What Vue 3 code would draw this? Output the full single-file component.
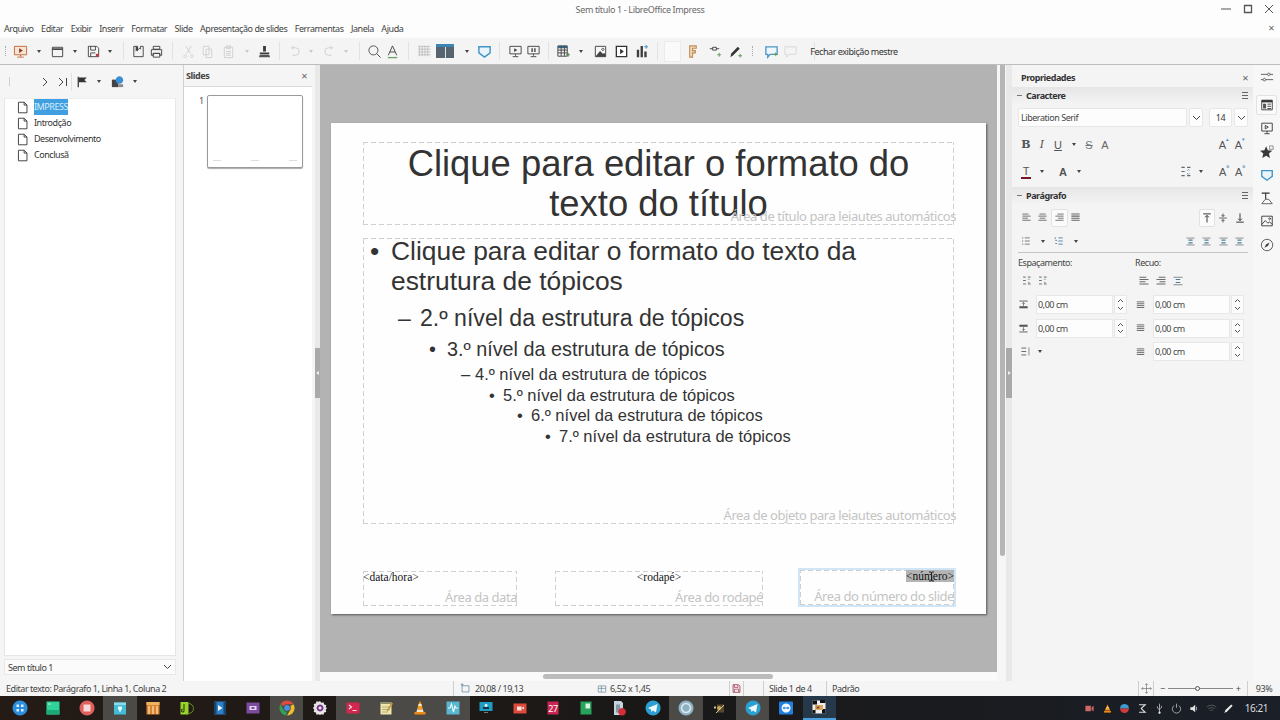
<script setup>
import { h } from 'vue'

const dark = '#444'
const faint = '#cfcfcf'

// each icon is a list of [d, stroke, fill, strokeWidth] on a 16 box
const icons = {
  present: [['M1.5 2.5h13v9h-13z', '#c46a35', '#f6e3d6'], ['M6.5 4.5l4 2.5-4 2.5z', 'none', '#8a3d16'], ['M8 11.5v2M4.5 14h7', '#c46a35']],
  open: [['M2.500 3.500h11v10h-11z', dark], ['M2.500 5.500h11', dark, 'none', 1.800]],
  save: [['M2.5 2.5h9l2 2v9h-11z', dark, '#f7f7f7'], ['M5 2.5v4h5v-4M5 13.5v-4h5', dark], ['M10.500 10.500h3v3h-3z', 'none', '#c0394b']],
  exportp: [['M3 2.5h4v4l2-2 1 1V2.5h3v11H3z', dark], ['M5 3v5l1.2-1.2L7.5 8V3', 'none', dark]],
  print: [['M4.5 2.5h7v3h-7zM2.5 6h11v6h-2v-2h-7v2h-2zM4.5 10h7v4h-7z', dark, '#f4f4f4']],
  cut: [['M5 2l5 8M11 2l-5 8M4.500 11.500a1.500 1.500 0 1 0 .1 0M11.500 11.500a1.500 1.500 0 1 0 .1 0', faint]],
  copy: [['M3.500 2.500h6v9h-6zM6.500 5.500h6v9h-6z', faint, '#f6f6f6']],
  paste: [['M3.500 3.500h9v11h-9zM6 2h4v3H6zM5.500 8h5M5.500 10h5M5.500 12h5', faint]],
  clear: [['M6.500 2h3v6h-3zM3 9h10v2H3z', 'none', '#3b3b3b'], ['M3 11.500h10l1 2.500H2z', 'none', '#555']],
  undo: [['M5 4h4a4 4 0 0 1 0 8H6M5 4l2-2M5 4l2 2', faint]],
  redo: [['M11 4H7a4 4 0 0 0 0 8h3M11 4L9 2M11 4L9 6', faint]],
  find: [['M6.800 2a4.800 4.800 0 1 0 .1 0M10.200 10.200l4.300 4.300', dark]],
  fontw: [['M3.500 12L8 2l4.500 10M5.300 8.500h5.400', dark], ['M3 14.500h10', '#6aa26a', 'none', 1.400]],
  grid: [['M1.500 2.500h13M1.500 5.500h13M1.500 8.500h13M1.500 11.500h13M2.500 2v11M5.500 2v11M8.500 2v11M11.500 2v11', '#b5b5b5', 'none', .8]],
  shape: [['M2 3h12v6.500l-6 4.500-6-4.500z', '#3f93c6', '#eaf4fa', 1.500]],
  sshow: [['M2 2.500h12v8H2z', dark], ['M6.500 4.500l3.500 2-3.500 2z', 'none', dark], ['M8 10.500v2M5 13.500h6', dark]],
  spause: [['M2 2.500h12v8H2z', dark], ['M6.500 4.500v4M9.500 4.500v4', dark, 'none', 1.500], ['M8 10.500v2M5 13.500h6', dark]],
  table: [['M2 2h10v11H2z', dark], ['M2 2h10v2.500H2z', 'none', '#33688f'], ['M2 6.500h10M2 9.500h10M5.500 2v11M9 2v11', dark], ['M11 11.500h4M13 9.500v4', '#4a8d4a']],
  image: [['M2.500 2.500h11v11h-11z', dark, '#f7f7f7'], ['M2.500 13.500l5-6 3 3 1.500-1 1.500 2v2z', 'none', '#444'], ['M10.500 4.500a1.200 1.200 0 1 0 .1 0', dark]],
  media: [['M2.500 2.500h11v11h-11z', '#333', '#fff', 1.400], ['M6.500 5l4 3-4 3z', 'none', '#333']],
  chart: [['M3 6h2.500v8H3zM7 2h2.500v12H7zM11 8h2.500v6H11z', 'none', '#3d3d3d'], ['M13 1v4M11 3h4', '#3c8fc4']],
  fbox: [['M5 2h7v2.500H8v2.500h3v2.500H8V14H5z', '#c18b52', '#f3dcc1', 1.200]],
  connect: [['M3 5h3M10 5h3', dark], ['M6 3.500h4v3H6z', dark], ['M11 11.500h4M13 9.500v4', '#5a9a5a']],
  pen: [['M2.500 14l1-4L10.500 3l2 2-7 7z', 'none', '#333'], ['M11 12.500h4M13 10.500v4', '#5a9a5a']],
  comment: [['M2 3h12v8H6.500L4 14v-3H2z', '#4b95c4', '#eef6fb', 1.400], ['M10.500 11h4M12.500 9v4', '#5a9a5a']],
  commentoff: [['M2 3h12v8H6.500L4 14v-3H2z', '#d8d8d8']],
  flag: [['M4 2v13', '#333', 'none', 1.500], ['M4.500 3h10l-3 3 3 3h-10z', 'none', '#333']],
  dragm: [['M2 6h7v8H2z', 'none', '#444'], ['M10 2.500a4 4 0 1 0 .1 0', 'none', '#3a8fd4'], ['M9 11h5v3H9z', 'none', '#888']],
  page: [['M3 1.500h7l3.500 3.500v9.500H3zM10 1.500v3.500h3.500', '#333', '#fff', 1.100]],
  sliders: [['M1 5h14M1 11h14', '#444', 'none', .9], ['M10 3.500a1.500 1.500 0 1 0 .1 0M5 9.500a1.500 1.500 0 1 0 .1 0', '#444', '#f7f7f7', .9]],
  props: [['M2 2.500h12v11H2z', '#333', '#fff'], ['M2 2.500h12v2.500H2z', 'none', '#333'], ['M3.500 6.500h3.500v5.500H3.500z', 'none', '#555'], ['M8.500 7h4M8.500 9.500h4M8.500 12h4', '#333']],
  slidet: [['M2 2.500h12v9H2z', '#333'], ['M6 5l3.500 2L6 9zM8 11.500v2.500M5 14.500h6', '#333']],
  star: [['M7 1.500l2 4.500 5 .500-3.800 3.300 1.200 5L7 12.200l-4.400 2.600 1.200-5L0 6.500l5-.500z', 'none', '#3a3a3a'], ['M11 1h4v4h-4z', '#888']],
  tshape: [['M2 2.500h9M6.500 2.500V9', '#333', 'none', 1.300], ['M2 14.500h12l-4-5H6z', '#555']],
  gallery: [['M2 2.500h12v11H2z', '#333'], ['M2 12l4-4.500 3 3 2-1.500 3 3', '#333'], ['M11 4.500a1 1 0 1 0 .1 0', '#333']],
  compass: [['M8 1.500a6.500 6.500 0 1 0 .1 0', '#444'], ['M11 5L7 7l-2 4 4-2z', 'none', '#444']],
  alignl: [['M2 3h9M2 6h12M2 9h8M2 12h12', '#666', 'none', 1.300]],
  alignc: [['M3.500 3h9M2 6h12M4 9h8M2 12h12', '#666', 'none', 1.300]],
  alignr: [['M5 3h9M2 6h12M6 9h8M2 12h12', '#666', 'none', 1.300]],
  alignj: [['M2 3h12M2 6h12M2 9h12M2 12h12', '#666', 'none', 1.500]],
  vtop: [['M3 2.500h10M8 14V5M5.500 7L8 4.500 10.500 7', '#333', 'none', 1.300]],
  vmid: [['M3 8h10M8 2v4M8 10v4M6 4l2 2 2-2M6 12l2-2 2 2', '#333']],
  vbot: [['M3 13.500h10M8 2v9M5.500 9L8 11.500 10.500 9', '#333', 'none', 1.300]],
  bullets: [['M6 3h8M6 8h8M6 13h8', '#777', 'none', 1.500], ['M2 3h1.500M2 8h1.500M2 13h1.500', '#444', 'none', 1.500]],
  numbers: [['M7 3h7M7 8h7M7 13h7', '#4a87b5', 'none', 1.500], ['M2 2v3M2 7h3M2 12h3', '#444']],
  dirs: [['M2 3h12M2 13h12', '#666'], ['M5 6h6M5 10h6', '#4a7d9c', 'none', 1.500]],
  spacing: [['M3 3h4M3 8h4M3 13h4M10 3h4M10 13h4', '#666', 'none', 1.400], ['M10 7l1.500-1.500L13 7M10 10l1.500 1.500L13 10', '#4a87b5']],
  above: [['M2 3h12', '#555', 'none', 1.300], ['M8 5v5M6 7l2-2 2 2', '#555'], ['M2 12h12', '#555', 'none', 3]],
  below: [['M2 13h12', '#555', 'none', 1.300], ['M8 6v5M6 9l2 2 2-2', '#555'], ['M2 4h12', '#555', 'none', 3]],
  lines: [['M2 3h7M2 8h7M2 13h7', '#666', 'none', 1.400], ['M13 2v12', '#666']],
  move: [['M8 1v14M1 8h14M6 3l2-2 2 2M6 13l2 2 2-2M3 6L1 8l2 2M13 6l2 2-2 2', '#666', 'none', .9]],
  marquee: [['M3 4h10v9H3zM1 2h4M3 1v4', '#5a7e94']],
  size: [['M2 3h12v10H2zM2 7h12M7 3v10', '#5a7e94']],
  savemark: [['M3 2.500h8l2 2v9H3z', '#9c3c50', '#f7e8ea', 1.200], ['M5 3v3.500h5V3M5 13v-4h6v4', '#9c3c50']],

  // taskbar launchers
  tLaunch: [['M8 .5a7.500 7.500 0 1 0 .1 0', 'none', '#2d8fdc'], ['M4.500 4.500h2.500v2.500H4.500zM9 4.500h2.500v2.500H9zM4.500 9h2.500v2.500H4.500zM9 9h2.500v2.500H9z', 'none', '#dcefff']],
  tGreen: [['M1.500 1.500h13v13h-13z', 'none', '#2fd39a'], ['M1.500 10h13v4.500h-13z', 'none', '#1fa877'], ['M3 4h3', '#bff5dd']],
  tRec: [['M8 .5a7.500 7.500 0 1 0 .1 0', 'none', '#df5f5b'], ['M4.500 4.500h7v7h-7z', 'none', '#f6d9d8']],
  tBox: [['M2 2.500h12v12H2z', 'none', '#43bcd6'], ['M2 2.500h12V5H2z', 'none', '#8adbea'], ['M6 6.500h4v3H9v2H7v-2H6z', 'none', '#e6fafd']],
  tPiano: [['M1.500 2h13v12.500h-13z', 'none', '#d9822b'], ['M1.500 2h13v3h-13z', 'none', '#f0b261'], ['M4 6v8M8 6v8M12 6v8', '#fae3c0', 'none', 1.200]],
  tMusic: [['M1.500 2h8v12.500h-8z', 'none', '#9ad22d'], ['M9.500 3.500a5 5 0 0 1 0 10', '#6b9223'], ['M5 4v6.500a1.300 1.300 0 1 1-1-1.200', '#33500f', 'none', 1.200]],
  tFilm: [['M2 1.500h12v13H2z', 'none', '#2e7fc4'], ['M2 1.500h2.500v13H2zM11.500 1.500H14v13h-2.500z', 'none', '#16456e'], ['M6 5l4.500 3L6 11z', 'none', '#eaf5ff']],
  tPurple: [['M1.500 2.500h13v11h-13z', 'none', '#7c4ba0'], ['M4.500 6h7v4h-7z', 'none', '#e5d6ef'], ['M6.500 7h3v2h-3z', 'none', '#7c4ba0']],
  tChrome: [['M8 .5a7.500 7.500 0 0 1 6.500 3.750H8a3.750 3.750 0 0 0-3.250 1.900L1.500 4.250A7.500 7.500 0 0 1 8 .5z', 'none', '#dd4b3e'], ['M14.500 4.250A7.500 7.500 0 0 1 8 15.500l3.250-5.600A3.750 3.750 0 0 0 11.250 6z', 'none', '#eebd2c'], ['M1.500 4.250l3.250 5.650A3.750 3.750 0 0 0 8 11.750l-1 3.700A7.500 7.500 0 0 1 1.500 4.250z', 'none', '#2fa354'], ['M8 5a3 3 0 1 0 .1 0', 'none', '#4a90e2']],
  tGear: [['M8 1l1.300 1.800 2.200-.6.600 2.200 2.200.6-.6 2.200L15 8l-1.300 1.800.6 2.200-2.200.6-.6 2.200-2.200-.6L8 15l-1.300-.8-2.200.6-.6-2.200-2.200-.6.6-2.200L1 8l1.300-1.800-.6-2.200 2.200-.6.6-2.200 2.200.6z', 'none', '#e8e5ea'], ['M8 4.500a3.500 3.500 0 1 0 .1 0', 'none', '#7b3a86'], ['M8 6.500a1.500 1.500 0 1 0 .1 0', 'none', '#f0e9f3']],
  tTerm: [['M1.500 2.500h13v11h-13z', 'none', '#d5264f'], ['M4 5l2.500 2L4 9M7.500 10.500h4', '#fbe1e7', 'none', 1.200]],
  tNotes: [['M2.500 2.500h11v12h-11z', 'none', '#f1e7ae'], ['M2.500 2.500h11V4h-11z', 'none', '#8f8a68'], ['M4 7h8M4 9.500h8M4 12h6', '#b3ab78'], ['M8.500 10.500l5-8 1.500 1-5 8z', 'none', '#c59a3d']],
  tVlc: [['M8 1l1.500 3h-3zM6 6h4l1 3.500H5z', 'none', '#f29a1d'], ['M6.500 4h3L10 6H6zM5 9.500h6L11.500 12h-7z', 'none', '#f7e5c4'], ['M2.500 12h11v2.500h-11z', 'none', '#ef8a12']],
  tWave: [['M1.500 1.500h13v13h-13z', 'none', '#58b6cf'], ['M3 8h2l1.500-4 2 8 1.500-6 1 2h2', '#e8fbff', 'none', 1.100]],
  tScreen: [['M1.500 2h13v9h-13z', 'none', '#1e9cc4'], ['M5 7h6v2H5z', 'none', '#14364a'], ['M8 4a1.500 1.500 0 1 0 .1 0', 'none', '#e9f8fd'], ['M6 12.500h4', '#777']],
  tCard: [['M1.500 3.500h13v10h-13z', 'none', '#dd4a3c'], ['M5 6.500h4.500v4H5zM9.500 8l2.500-1.500v3z', 'none', '#fbe3df']],
  tCal: [['M2.500 1.500h11v13h-11z', 'none', '#c92752']],
  tDoc: [['M2.500 1.500h11v13h-11z', 'none', '#27a35a'], ['M7.500 3.500h4.500v5H7.500z', 'none', '#d6f4e2']],
  tFile: [['M3 1h7l2 2v12H3z', 'none', '#c7d3dc'], ['M5 4.500h4v8H5z', 'none', '#8397a5'], ['M11 8a3.800 3.800 0 1 0 .1 0', 'none', '#d42d3b']],
  tPlane: [['M8 .5a7.500 7.500 0 1 0 .1 0', 'none', '#2a9fd0'], ['M3 8l9.500-4-1.500 8.500-3-2-1.500 1.500-.5-2.500z', 'none', '#eef9fd']],
  tRing: [['M8 .5a7.500 7.500 0 1 0 .1 0', 'none', '#8eb1c4'], ['M8 3.500a4.500 4.500 0 1 0 .1 0', '#dce8ee', 'none', 1.600]],
  tGimp: [['M3 6.500h2v2H3z', 'none', '#c9c3a8'], ['M6 4.500h7v8H6z', 'none', '#57482a'], ['M8 6a2 2 0 1 0 .1 0', 'none', '#c9a550'], ['M5 13l8-8', '#d9c892']],
  tTeam: [['M2 1.500h12a1 1 0 0 1 1 1v11a1 1 0 0 1-1 1H2a1 1 0 0 1-1-1v-11a1 1 0 0 1 1-1z', 'none', '#1f7fdc'], ['M8 3.500a4.500 4.500 0 1 0 .1 0', 'none', '#f2f8ff'], ['M4.500 8l2-1.500V7.500h3V6.500l2 1.500-2 1.500V8.500h-3v1z', 'none', '#1f7fdc']],
  tImpress: [['M1.500 1.500h13v13h-13z', 'none', '#eee'], ['M1.500 1.500H6v4H1.500zM9 1h5.500v3H9zM1.500 11h3v3.500h-3zM11 10h3.500v4.500H11z', 'none', '#111'], ['M4 6h8v5H4z', 'none', '#d9a860'], ['M5.500 7.500h3v2h-3z', 'none', '#8a4a2a']],

  // tray
  trCam: [['M2 4h8v8H2z', 'none', '#cf6666'], ['M11 6l3-2v8l-3-2z', 'none', '#cf6666']],
  trVlc: [['M8 2l4 9H4z', 'none', '#f29a1d'], ['M3 11.500h10V14H3z', 'none', '#ef8a12'], ['M6.800 6h2.400l.6 1.500H6.200z', 'none', '#f7e5c4']],
  trUpd: [['M8 1.500a6.500 6.500 0 0 1 6.500 6.500h-13A6.500 6.500 0 0 1 8 1.500z', 'none', '#3d9bd0'], ['M1.500 8h13a6.500 6.500 0 0 1-13 0z', 'none', '#cf3b3b']],
  trZ: [['M3 2.500h9L6 8l6 5.500H3', '#ddd', 'none', 1.500]],
  trUsb: [['M8 1v14M5 5v2.500L8 10M11 4v2.500L8 9', '#ddd'], ['M8 12.500a1.500 1.500 0 1 0 .1 0', 'none', '#ddd']],
  trPower: [['M4.500 3.800a6 6 0 1 0 7 0M8 1v6', '#bbb', 'none', 1.200]],
  trVol: [['M2 6h3l4-3.500v11L5 10H2z', 'none', '#e4e4e4'], ['M11 5.500v5', '#bbb', 'none', 1.200]],
  trWifi: [['M1 6a10 10 0 0 1 14 0M3.500 8.500a6.500 6.500 0 0 1 9 0M6 11a3 3 0 0 1 4 0', '#6f6f6f']],
  trPen: [['M2 14.500l1.500-4.500L12 2l2 2-8 8.500z', 'none', '#eee']]
}

const Ico = (props) => h('svg', { width: props.size || 16, height: props.size || 16, viewBox: '0 0 16 16', class: 'ico' },
  icons[props.name].map(p => h('path', { d: p[0], stroke: p[1] || dark, fill: p[2] || 'none', 'stroke-width': p[3] || 1 })))
Ico.props = ['name', 'size']

const menu = ['Arquivo', 'Editar', 'Exibir', 'Inserir', 'Formatar', 'Slide', 'Apresentação de slides', 'Ferramentas', 'Janela', 'Ajuda']

// c = centre of the item on the bar, widths are worked out from the neighbours
const toolItems = [
  { k: 'dots', c: 4 }, { i: 'present', c: 20 }, { k: 'caret', c: 39 }, { i: 'open', c: 57 }, { k: 'caret', c: 75 }, { i: 'save', c: 94 }, { k: 'caret', c: 112 },
  { k: 'sep', c: 122 }, { i: 'exportp', c: 136 }, { i: 'print', c: 158 }, { k: 'sep', c: 172 }, { i: 'cut', c: 186 }, { i: 'copy', c: 208 }, { i: 'paste', c: 229 },
  { k: 'caret off', c: 247 }, { i: 'clear', c: 266 }, { k: 'sep', c: 280 }, { i: 'undo', c: 293 }, { k: 'caret off', c: 311 }, { i: 'redo', c: 330 }, { k: 'caret off', c: 348 },
  { k: 'sep', c: 359 }, { i: 'find', c: 372 }, { i: 'fontw', c: 395 }, { k: 'sep', c: 408 }, { i: 'grid', c: 422 }, { k: 'layout', c: 446 }, { k: 'caret', c: 467 },
  { i: 'shape', c: 486 }, { k: 'sep', c: 499 }, { i: 'sshow', c: 514 }, { i: 'spause', c: 535 }, { k: 'sep', c: 549 }, { i: 'table', c: 562 }, { k: 'caret', c: 580 },
  { i: 'image', c: 600 }, { i: 'media', c: 621 }, { i: 'chart', c: 643 }, { k: 'sep', c: 657 }, { k: 'blank', c: 671 }, { i: 'fbox', c: 691 }, { i: 'connect', c: 715 },
  { i: 'pen', c: 737 }, { k: 'dots', c: 753 }, { i: 'comment', c: 770 }, { i: 'commentoff', c: 792 }, { k: 'sep', c: 806 }, { k: 'label', c: 854, t: 'Fechar exibição mestre' }
]
const tools = toolItems.map((it, n) => {
  const prev = toolItems[n - 1]
  const next = toolItems[n + 1]
  const left = prev ? (prev.c + it.c) / 2 : 0
  const right = next ? (next.c + it.c) / 2 : it.c + (it.c - left)
  return { ...it, w: right - left }
})

const outline = [
  { cls: 'l1', mark: '•', text: 'Clique para editar o formato do texto da estrutura de tópicos' },
  { cls: 'l2', mark: '–', text: '2.º nível da estrutura de tópicos' },
  { cls: 'l3', mark: '•', text: '3.º nível da estrutura de tópicos' },
  { cls: 'l4', mark: '–', text: '4.º nível da estrutura de tópicos' },
  { cls: 'l5', mark: '•', text: '5.º nível da estrutura de tópicos' },
  { cls: 'l6', mark: '•', text: '6.º nível da estrutura de tópicos' },
  { cls: 'l7', mark: '•', text: '7.º nível da estrutura de tópicos' }
]

const pages = ['IMPRESS', 'Introdção', 'Desenvolvimento', 'Conclusã']

const tabs = ['sliders', 'props', 'slidet', 'star', 'shape', 'tshape', 'gallery', 'compass']

const apps = [
  { i: 'tLaunch' }, { i: 'tGreen' }, { i: 'tRec' }, { i: 'tBox', on: true }, { i: 'tPiano' }, { i: 'tMusic' }, { i: 'tFilm' }, { i: 'tPurple' },
  { i: 'tChrome', on: true }, { i: 'tGear' }, { i: 'tTerm', on: true }, { i: 'tNotes', on: true }, { i: 'tVlc', on: true }, { i: 'tWave', on: true },
  { i: 'tScreen' }, { i: 'tCard' }, { i: 'tCal', t: '27' }, { i: 'tDoc' }, { i: 'tFile' }, { i: 'tPlane' }, { i: 'tRing', on: true }, { i: 'tGimp' },
  { i: 'tPlane', on: true }, { i: 'tTeam' }, { i: 'tImpress', active: true }
]

const trayIcons = ['trCam', 'trVlc', 'trUpd', 'trZ', 'trUsb', 'trPower', 'trVol', 'trWifi', 'trPen']
</script>

<template>
  <div class="app">
    <div class="titlebar">
      <span class="title">Sem título 1 - LibreOffice Impress</span>
      <div class="winbtns">
        <svg width="12" height="12" viewBox="0 0 12 12"><path d="M1 6h10" stroke="#555" /></svg>
        <svg width="12" height="12" viewBox="0 0 12 12"><path d="M2.500 2.500h7v7h-7z" stroke="#555" fill="none" stroke-width="1.300" /></svg>
        <svg width="12" height="12" viewBox="0 0 12 12"><path d="M2 2l8 8M10 2l-8 8" stroke="#555" /></svg>
      </div>
    </div>

    <div class="menubar">
      <span v-for="m in menu" :key="m" class="menu-item">{{ m }}</span>
      <span class="doc-close">×</span>
    </div>

    <div class="toolbar">
      <div v-for="(t, n) in tools" :key="n" class="cell" :style="{ width: t.w + 'px' }">
        <Ico v-if="t.i" :name="t.i" :size="15" />
        <span v-else-if="t.k === 'sep'" class="sep"></span>
        <span v-else-if="t.k === 'dots'" class="dots"></span>
        <span v-else-if="t.k === 'caret'" class="caret"></span>
        <span v-else-if="t.k === 'caret off'" class="caret off"></span>
        <span v-else-if="t.k === 'layout'" class="layout"><i></i><i></i></span>
        <span v-else-if="t.k === 'blank'" class="blank"></span>
        <span v-else class="tool-label">{{ t.t }}</span>
      </div>
    </div>

    <div class="main">
      <aside class="nav">
        <div class="nav-tools">
          <span class="navcell"><i class="tick"></i></span>
          <span class="navcell"></span>
          <span class="navcell"><svg width="10" height="12" viewBox="0 0 10 12"><path d="M3 2l4 4-4 4" stroke="#444" fill="none" /></svg></span>
          <span class="navcell lined"><svg width="12" height="12" viewBox="0 0 12 12"><path d="M2 2l4 4-4 4M9.500 2v8" stroke="#444" fill="none" /></svg></span>
          <span class="navcell"><Ico name="flag" :size="13" /></span>
          <span class="navcell"><span class="caret"></span></span>
          <span class="navcell"><Ico name="dragm" :size="15" /></span>
          <span class="navcell"><span class="caret"></span></span>
        </div>
        <div class="pagelist">
          <div v-for="(p, n) in pages" :key="p" class="pageitem">
            <Ico name="page" :size="13" />
            <span class="pagename" :class="{ sel: n === 0 }">{{ p }}</span>
          </div>
        </div>
        <div class="docselect">
          <span>Sem título 1</span>
          <svg width="9" height="6" viewBox="0 0 9 6"><path d="M1 1l3.500 3.500L8 1" stroke="#444" fill="none" /></svg>
        </div>
      </aside>

      <aside class="slides">
        <div class="panelhead">
          <span>Slides</span>
          <span class="x">×</span>
        </div>
        <div class="thumbs">
          <span class="thumbno">1</span>
          <div class="thumb">
            <i></i><i></i><i></i>
          </div>
        </div>
      </aside>

      <div class="splitter"><span class="handle"></span></div>

      <section class="work">
        <div class="canvas">
          <div class="slide">
            <div class="ph title-ph">
              <h1>Clique para editar o formato do texto do título</h1>
              <span class="hint">Área de título para leiautes automáticos</span>
            </div>
            <div class="ph outline-ph">
              <div v-for="o in outline" :key="o.cls" class="ol" :class="o.cls">
                <span class="mark">{{ o.mark }}</span>
                <span>{{ o.text }}</span>
              </div>
              <span class="hint">Área de objeto para leiautes automáticos</span>
            </div>
            <div class="foot">
              <div class="ph date-ph">
                <span class="ftext">&lt;data/hora&gt;</span>
                <span class="hint">Área da data</span>
              </div>
              <div class="ph footer-ph">
                <span class="ftext">&lt;rodapé&gt;</span>
                <span class="hint">Área do rodapé</span>
              </div>
              <div class="num-wrap">
                <div class="ph number-ph">
                  <span class="ftext"><b>&lt;número&gt;</b></span>
                  <span class="hint">Área do número do slide</span>
                </div>
                <svg class="cursor" width="7" height="11" viewBox="0 0 7 11"><path d="M1 1h2l.5 1L4 1h2M3.500 2v7M1 10h2l.5-1 .5 1h2" stroke="#222" fill="none" /></svg>
              </div>
            </div>
          </div>
        </div>
        <div class="hscroll"><span></span></div>
      </section>

      <div class="vscroll"><span></span></div>
      <div class="splitter right"><span class="handle"></span></div>

      <aside class="side">
        <div class="deck">
          <div class="deckhead">
            <b>Propriedades</b>
            <span class="x">×</span>
          </div>

          <div class="sect">
            <i class="minus"></i><b>Caractere</b><span class="burger"></span>
          </div>
          <div class="fontrow">
            <div class="box fontname">Liberation Serif</div>
            <div class="box drop"><svg width="9" height="6" viewBox="0 0 9 6"><path d="M1 1l3.500 3.500L8 1" stroke="#444" fill="none" /></svg></div>
            <div class="box fontsize">14</div>
            <div class="box drop"><svg width="9" height="6" viewBox="0 0 9 6"><path d="M1 1l3.500 3.500L8 1" stroke="#444" fill="none" /></svg></div>
          </div>
          <div class="fmt">
            <span class="gl bold">B</span>
            <span class="gl ital">I</span>
            <span class="gl under">U</span>
            <span class="caret"></span>
            <span class="gl strike">S</span>
            <span class="gl plain">A</span>
            <span class="grow"></span>
            <span class="gl small">A<sup>▴</sup></span>
            <span class="gl small">A<sub>▾</sub></span>
          </div>
          <div class="fmt second">
            <span class="gl tcolor">T</span>
            <span class="caret"></span>
            <span class="gl high">A</span>
            <span class="caret"></span>
            <span class="grow"></span>
            <span class="gl"><Ico name="spacing" :size="13" /></span>
            <span class="caret"></span>
            <span class="gl small after">A<sup>a</sup></span>
            <span class="gl small">A<sub>a</sub></span>
          </div>

          <div class="sect para">
            <i class="minus"></i><b>Parágrafo</b><span class="burger"></span>
          </div>
          <div class="parow">
            <span><Ico name="alignl" :size="11" /></span>
            <span><Ico name="alignc" :size="11" /></span>
            <span class="boxed"><Ico name="alignr" :size="11" /></span>
            <span><Ico name="alignj" :size="11" /></span>
            <span class="grow"></span>
            <span class="boxed"><Ico name="vtop" :size="12" /></span>
            <span><Ico name="vmid" :size="12" /></span>
            <span><Ico name="vbot" :size="12" /></span>
          </div>
          <div class="parow list">
            <span><Ico name="bullets" :size="10" /></span>
            <span><i class="caret"></i></span>
            <span><Ico name="numbers" :size="10" /></span>
            <span><i class="caret"></i></span>
            <span class="grow"></span>
            <span><Ico name="dirs" :size="11" /></span>
            <span><Ico name="dirs" :size="11" /></span>
            <span><Ico name="dirs" :size="11" /></span>
            <span><Ico name="dirs" :size="11" /></span>
          </div>
          <div class="rule"></div>

          <div class="cols">
            <div class="col">
              <div class="collabel">Espaçamento:</div>
              <div class="colicons">
                <Ico name="spacing" :size="11" />
                <Ico name="spacing" :size="11" />
              </div>
              <div class="spin">
                <Ico name="above" :size="11" />
                <div class="spinbox">0,00 cm</div>
                <div class="spinarrows">
                  <svg width="7" height="5" viewBox="0 0 7 5"><path d="M1 4l2.500-2.500L6 4" stroke="#555" fill="none" /></svg>
                  <svg width="7" height="5" viewBox="0 0 7 5"><path d="M1 1l2.500 2.500L6 1" stroke="#555" fill="none" /></svg>
                </div>
              </div>
              <div class="spin">
                <Ico name="below" :size="11" />
                <div class="spinbox">0,00 cm</div>
                <div class="spinarrows">
                  <svg width="7" height="5" viewBox="0 0 7 5"><path d="M1 4l2.500-2.500L6 4" stroke="#555" fill="none" /></svg>
                  <svg width="7" height="5" viewBox="0 0 7 5"><path d="M1 1l2.500 2.500L6 1" stroke="#555" fill="none" /></svg>
                </div>
              </div>
              <div class="linesp">
                <Ico name="lines" :size="11" />
                <span class="caret"></span>
              </div>
            </div>
            <div class="col">
              <div class="collabel">Recuo:</div>
              <div class="colicons indent">
                <Ico name="alignl" :size="12" />
                <Ico name="alignr" :size="12" />
                <Ico name="dirs" :size="12" />
              </div>
              <div v-for="s in 3" :key="s" class="spin">
                <Ico name="alignj" :size="10" />
                <div class="spinbox">0,00 cm</div>
                <div class="spinarrows">
                  <svg width="7" height="5" viewBox="0 0 7 5"><path d="M1 4l2.500-2.500L6 4" stroke="#555" fill="none" /></svg>
                  <svg width="7" height="5" viewBox="0 0 7 5"><path d="M1 1l2.500 2.500L6 1" stroke="#555" fill="none" /></svg>
                </div>
              </div>
            </div>
          </div>
        </div>

        <div class="tabbar">
          <span v-for="(t, n) in tabs" :key="t" class="tab" :class="{ on: n === 1 }"><Ico :name="t" :size="14" /></span>
        </div>
      </aside>
    </div>

    <footer class="status">
      <span class="st st-edit">Editar texto: Parágrafo 1, Linha 1, Coluna 2</span>
      <span class="st st-pos"><Ico name="marquee" :size="11" />20,08 / 19,13</span>
      <span class="st st-size"><Ico name="size" :size="10" />6,52 x 1,45</span>
      <span class="st st-save"><Ico name="savemark" :size="11" /></span>
      <span class="st st-gap"></span>
      <span class="st st-slide">Slide 1 de 4</span>
      <span class="st st-style">Padrão</span>
      <span class="st st-move"><Ico name="move" :size="11" /></span>
      <span class="st st-zoom">
        <span>−</span>
        <span class="track"><i></i></span>
        <span>+</span>
      </span>
      <span class="st st-pct">93%</span>
    </footer>

    <div class="taskbar">
      <div class="apps">
        <span v-for="(a, n) in apps" :key="n" class="app-slot" :class="{ on: a.on, active: a.active }">
          <Ico :name="a.i" :size="16" />
          <span v-if="a.t" class="app-num">{{ a.t }}</span>
        </span>
      </div>
      <div class="tray">
        <span v-for="t in trayIcons" :key="t" class="tray-cell"><Ico :name="t" :size="11" /></span>
        <span class="clock">16:21</span>
      </div>
    </div>
  </div>
</template>

<style scoped>
.app {
  width: 1280px;
  height: 720px;
  display: flex;
  flex-direction: column;
  overflow: hidden;
  background: #fdfdfd;
  color: #3a3a3a;
  font-family: "Noto Sans", sans-serif;
  font-size: 9px;
  letter-spacing: -0.45px;
}

.ico {
  display: block;
  flex: none;
}

.titlebar {
  height: 18px;
  display: flex;
  align-items: center;
  justify-content: center;
  position: relative;
  flex: none;
}

.title {
  font-size: 9px;
  letter-spacing: -0.35px;
  color: #6a6a6a;
}

.winbtns {
  position: absolute;
  right: 5px;
  top: 3px;
  display: flex;
  gap: 9.500px;
}

.menubar {
  height: 20px;
  display: flex;
  align-items: center;
  gap: 7.500px;
  padding-left: 4px;
  flex: none;
  position: relative;
}

.menu-item {
  color: #444;
}

.doc-close {
  position: absolute;
  right: 6px;
  top: 2px;
  font-size: 11px;
  color: #666;
}

.toolbar {
  height: 27px;
  background: #f4f4f4;
  border-bottom: 1px solid #bdbdbd;
  box-sizing: border-box;
  display: flex;
  align-items: center;
  flex: none;
}

.cell {
  display: flex;
  align-items: center;
  justify-content: center;
  flex: none;
  height: 100%;
}

.sep {
  width: 1px;
  height: 18px;
  background: #e2e2e2;
}

.dots {
  width: 1px;
  height: 10px;
  border-left: 1px dotted #aaa;
}

.caret {
  display: block;
  width: 0;
  height: 0;
  flex: none;
  border-left: 2.500px solid transparent;
  border-right: 2.500px solid transparent;
  border-top: 3px solid #444;
}

.caret.off {
  border-top-color: #c9c9c9;
}

.layout {
  width: 18px;
  height: 14px;
  background: #dfe4e8;
  border-top: 3px solid #3d86b4;
  display: flex;
  gap: 1px;
  box-sizing: border-box;
}

.layout i {
  flex: 1;
  background: #55646f;
}

.blank {
  width: 19px;
  height: 21px;
  background: #fafafa;
  border: 1px solid #ebebeb;
  box-sizing: border-box;
}

.tool-label {
  color: #333;
  white-space: nowrap;
}

.main {
  flex: 1;
  display: flex;
  min-height: 0;
  background: #f5f5f5;
}

.nav {
  width: 179px;
  flex: none;
  display: flex;
  flex-direction: column;
  padding: 0 3px 6px 4px;
  box-sizing: border-box;
}

.nav-tools {
  height: 33px;
  display: flex;
  align-items: center;
  margin-left: -4px;
  flex: none;
}

.navcell {
  width: 18px;
  height: 18px;
  display: flex;
  align-items: center;
  justify-content: center;
  box-sizing: border-box;
}

.navcell.lined {
  border-right: 1px solid #e0e0e0;
}

.tick {
  width: 1px;
  height: 9px;
  background: #cfcfcf;
}

.pagelist {
  flex: 1;
  background: #fff;
  border: 1px solid #e6e6e6;
  border-top-color: #eee;
}

.pageitem {
  height: 16px;
  display: flex;
  align-items: center;
  gap: 5px;
  padding-left: 11px;
}

.pagename {
  color: #333;
  line-height: 16px;
}

.pagename.sel {
  background: #3f9fe0;
  color: #d9ecfa;
}

.docselect {
  height: 16px;
  margin-top: 3px;
  background: #fbfbfb;
  border: 1px solid #e8e8e8;
  box-sizing: border-box;
  display: flex;
  align-items: center;
  justify-content: space-between;
  padding: 0 3px;
  flex: none;
}

.slides {
  width: 132px;
  margin-left: 4px;
  flex: none;
  display: flex;
  flex-direction: column;
  border-left: 1px solid #d0d0d0;
  box-sizing: border-box;
}

.panelhead {
  height: 22px;
  display: flex;
  align-items: center;
  justify-content: space-between;
  padding: 0 5px 0 2px;
  font-weight: 700;
  color: #444;
  border-bottom: 1px solid #d8d8d8;
  margin: 0 3px 0 0;
  flex: none;
  box-sizing: border-box;
}

.x {
  font-weight: 400;
  font-size: 11px;
  color: #666;
}

.thumbs {
  flex: 1;
  background: #fff;
  display: flex;
  align-items: flex-start;
  padding: 8px 0 0 15px;
  margin-right: 3px;
  gap: 3px;
}

.thumbno {
  line-height: 9px;
  margin-top: 1px;
  color: #555;
}

.thumb {
  width: 96px;
  height: 73px;
  box-sizing: border-box;
  background: #fff;
  border: 1px solid #9a9a9a;
  border-radius: 2px;
  box-shadow: 0 1px 1px #aaa;
  display: flex;
  align-items: flex-end;
  justify-content: space-between;
  padding: 0 5px 6px;
}

.thumb i {
  width: 8px;
  height: 1px;
  background: #ddd;
}

.splitter {
  width: 5px;
  flex: none;
  background: #e9e9e9;
  display: flex;
  align-items: center;
}

.splitter.right {
  width: 6px;
}

.handle {
  width: 100%;
  height: 50px;
  background: #a9a9a9;
  display: flex;
  align-items: center;
  justify-content: center;
}

.handle::after {
  content: "";
  border-top: 2.500px solid transparent;
  border-bottom: 2.500px solid transparent;
  border-right: 3px solid #eee;
}

.splitter.right .handle::after {
  border-right: 0;
  border-left: 3px solid #eee;
}

.work {
  width: 677px;
  flex: none;
  display: flex;
  flex-direction: column;
}

.canvas {
  flex: 1;
  background: #b3b3b3;
  display: flex;
  align-items: center;
  justify-content: center;
}

.hscroll {
  height: 9px;
  background: #fafafa;
  flex: none;
  display: flex;
  align-items: center;
  padding-left: 223px;
}

.hscroll span {
  width: 230px;
  height: 5px;
  background: #bcbcbc;
  border-radius: 3px;
}

.vscroll {
  width: 9px;
  flex: none;
  background: #f6f6f6;
  padding-left: 3px;
  box-sizing: border-box;
}

.vscroll span {
  display: block;
  width: 5px;
  height: 491px;
  background: #b5b5b5;
  border-radius: 0 0 3px 3px;
}

.slide {
  width: 655px;
  height: 491px;
  box-sizing: border-box;
  background: #fefefe;
  padding: 19px 32px 0;
  box-shadow: 1px 1px 2px #555;
  color: #333;
  font-family: "Liberation Sans", Arial, sans-serif;
  letter-spacing: 0;
  display: flex;
  flex-direction: column;
}

.ph {
  box-sizing: border-box;
  position: relative;
  flex: none;
  background-color: transparent;
  background-image:
    repeating-linear-gradient(90deg, #d0d0d0 0 5px, transparent 5px 8px),
    repeating-linear-gradient(90deg, #d0d0d0 0 5px, transparent 5px 8px),
    repeating-linear-gradient(0deg, #d0d0d0 0 5px, transparent 5px 8px),
    repeating-linear-gradient(0deg, #d0d0d0 0 5px, transparent 5px 8px);
  background-size: 100% 1px, 100% 1px, 1px 100%, 1px 100%;
  background-position: 0 0, 0 100%, 0 0, 100% 0;
  background-repeat: no-repeat;
}

.title-ph {
  height: 83px;
}

h1 {
  margin: 0;
  font-size: 36.400px;
  line-height: 40px;
  font-weight: 400;
  text-align: center;
  color: #333;
  padding: 2px 40px 0;
}

.hint {
  position: absolute;
  right: -2px;
  bottom: 0;
  font-family: "Noto Sans", sans-serif;
  font-size: 13px;
  letter-spacing: -0.45px;
  line-height: 17px;
  color: #c4c4c4;
  white-space: nowrap;
}

.outline-ph {
  height: 286px;
  margin-top: 13px;
}

.ol {
  display: flex;
}

.mark {
  flex: none;
}

.l1 { font-size: 26.400px; line-height: 30px; padding-left: 7px; margin: -2px 0 8px; }
.l1 .mark { width: 21px; }
.l2 { font-size: 23.100px; line-height: 28px; padding-left: 35px; margin-bottom: 5px; }
.l2 .mark { width: 22px; }
.l3 { font-size: 19.800px; line-height: 24px; padding-left: 66px; margin-bottom: 3px; }
.l3 .mark { width: 18px; }
.l4 { font-size: 16.500px; line-height: 20.500px; padding-left: 98px; }
.l4 .mark { width: 14px; }
.l5 { font-size: 16.500px; line-height: 20.500px; padding-left: 126px; }
.l5 .mark { width: 14px; }
.l6 { font-size: 16.500px; line-height: 20.500px; padding-left: 154px; }
.l6 .mark { width: 14px; }
.l7 { font-size: 16.500px; line-height: 20.500px; padding-left: 182px; }
.l7 .mark { width: 14px; }

.foot {
  margin-top: 47px;
  display: flex;
  align-items: flex-start;
}

.foot .hint {
  right: 0;
}

.date-ph {
  width: 154px;
  height: 35px;
}

.footer-ph {
  width: 208px;
  height: 35px;
  margin-left: 38px;
}

.num-wrap {
  margin-left: 35px;
  width: 158px;
  height: 39px;
  margin-top: -3px;
  background: #d0e6f6;
  padding: 2px;
  box-sizing: border-box;
  position: relative;
  flex: none;
}

.number-ph {
  height: 35px;
  background-color: #fefefe;
}

.ftext {
  display: block;
  font-family: "Liberation Serif", serif;
  font-size: 11.500px;
  line-height: 12px;
  color: #111;
}

.date-ph .ftext { text-align: left; }
.footer-ph .ftext { text-align: center; }
.number-ph .ftext { text-align: right; }

.number-ph b {
  font-weight: 400;
  background: #b4b4b4;
}

.cursor {
  position: absolute;
  left: 130px;
  top: 3px;
}

.side {
  flex: 1;
  display: flex;
  min-width: 0;
}

.deck {
  flex: 1;
  min-width: 0;
  background: #f4f4f4;
  box-sizing: border-box;
}

.deckhead {
  height: 22px;
  display: flex;
  align-items: center;
  justify-content: space-between;
  padding: 2px 5px 0 9px;
  box-sizing: border-box;
  color: #333;
}

.sect {
  height: 18px;
  display: flex;
  align-items: center;
  gap: 4px;
  padding: 0 5px 1px;
  box-sizing: border-box;
  background: linear-gradient(#e6e6e6, #f4f4f4);
  color: #333;
}

.sect.para {
  margin-top: 2px;
}

.minus {
  width: 5px;
  height: 1px;
  background: #777;
}

.burger {
  margin-left: auto;
  width: 6px;
  height: 5px;
  border-top: 1px solid #666;
  border-bottom: 1px solid #666;
  position: relative;
}

.burger::after {
  content: "";
  position: absolute;
  left: 0;
  right: 0;
  top: 2px;
  height: 1px;
  background: #666;
}

.fontrow {
  display: flex;
  align-items: center;
  padding: 3px 5px 0 6px;
  height: 19px;
}

.box {
  background: #fdfdfd;
  border: 1px solid #e7e7e7;
  border-radius: 2px;
  height: 19px;
  box-sizing: border-box;
  display: flex;
  align-items: center;
  justify-content: center;
}

.fontname {
  width: 169px;
  justify-content: flex-start;
  padding-left: 2px;
  color: #444;
}

.box.drop {
  width: 14px;
  margin-left: 2px;
}

.fontsize {
  width: 23px;
  margin-left: 6px;
}

.fmt {
  display: flex;
  align-items: center;
  height: 27px;
  padding: 4px 5px 0 6px;
  box-sizing: content-box;
}

.fmt.second {
  padding-top: 0;
}

.fmt .caret {
  margin: 0 5.500px;
}

.grow {
  flex: 1;
}

.gl {
  width: 16px;
  display: flex;
  justify-content: center;
  font-family: "Liberation Sans", sans-serif;
  font-size: 11px;
  letter-spacing: 0;
  color: #555;
  line-height: 12px;
}

.bold { font-family: "DejaVu Serif", serif; font-weight: 700; font-size: 11px; }
.ital { font-family: "DejaVu Serif", serif; font-style: italic; }
.under { text-decoration: underline; }
.strike { text-decoration: line-through; color: #777; }
.plain { color: #666; }

.small sup, .small sub {
  font-size: 5px;
  color: #3c8fc4;
  line-height: 0;
}

.tcolor {
  width: 10px;
  margin: 0 3px;
  border-bottom: 2px solid #7a1422;
}

.high {
  font-weight: 700;
  margin-left: 6px;
  position: relative;
}

.small.after {
  margin-left: 8px;
}

.parow {
  display: flex;
  align-items: center;
  height: 21px;
  padding: 2px 5px 0 6px;
  box-sizing: content-box;
}

.parow > span {
  width: 16.500px;
  height: 18px;
  display: flex;
  align-items: center;
  justify-content: center;
  box-sizing: border-box;
}

.parow > span.grow {
  flex: 1;
}

.parow.list {
  height: 22px;
}

.boxed {
  border: 1px solid #e2e2e2;
  background: #fbfbfb;
  border-radius: 2px;
}

.rule {
  height: 1px;
  background: #c5c5c5;
  margin: 0 5px 0 6px;
}

.cols {
  display: flex;
  padding: 1px 0 0 6px;
}

.col {
  width: 117px;
}

.collabel {
  height: 16px;
  line-height: 17px;
  color: #444;
}

.colicons {
  display: flex;
  gap: 5px;
  height: 21px;
  align-items: center;
  padding-left: 3px;
  margin-bottom: 4px;
}

.colicons.indent {
  gap: 5px;
}

.spin {
  display: flex;
  align-items: center;
  height: 19px;
  margin-bottom: 4.500px;
}

.spin .ico {
  width: 11px;
  margin-right: 7px;
}

.spinbox {
  width: 77px;
  height: 19px;
  box-sizing: border-box;
  background: #fdfdfd;
  border: 1px solid #e7e7e7;
  padding-left: 1px;
  line-height: 17px;
  color: #444;
}

.spinarrows {
  width: 13px;
  height: 19px;
  margin-left: 1px;
  box-sizing: border-box;
  background: #fbfbfb;
  border: 1px solid #e7e7e7;
  display: flex;
  flex-direction: column;
  align-items: center;
  justify-content: space-evenly;
}

.linesp {
  display: flex;
  align-items: center;
  gap: 7px;
  height: 19px;
  padding-left: 2px;
}

.tabbar {
  width: 27px;
  flex: none;
  background: #f7f7f7;
  display: flex;
  flex-direction: column;
  align-items: center;
  padding-top: 2px;
  box-sizing: border-box;
}

.tab {
  width: 21px;
  height: 20px;
  display: flex;
  align-items: center;
  justify-content: center;
  border-radius: 2px;
  margin-bottom: 3.300px;
}

.tab:first-child {
  margin-bottom: 8px;
}

.tab.on {
  background: #fafafa;
  border: 1px solid #e2e2e2;
  box-sizing: border-box;
}

.status {
  height: 15px;
  flex: none;
  background: #f5f5f5;
  display: flex;
  align-items: center;
  color: #444;
}

.st {
  display: flex;
  align-items: center;
  height: 100%;
  box-sizing: border-box;
  flex: none;
  white-space: nowrap;
  border-left: 1px solid #cfcfcf;
}

.st-edit { width: 453px; padding-left: 6px; border-left: 0; }
.st-pos { width: 138px; padding-left: 6px; gap: 4px; }
.st-size { width: 138px; padding-left: 6px; gap: 3px; border-left: 0; }
.st-save { width: 14px; justify-content: center; }
.st-gap { width: 20px; }
.st-slide { width: 63px; padding-left: 5px; }
.st-style { width: 312px; padding-left: 5px; }
.st-move { width: 15px; justify-content: center; }
.st-zoom { width: 94px; gap: 3px; padding-left: 6px; }
.st-pct { flex: 1; justify-content: center; }

.track {
  width: 65px;
  height: 1px;
  background: #888;
  position: relative;
}

.track i {
  position: absolute;
  left: 27px;
  top: -2px;
  width: 5px;
  height: 5px;
  border-radius: 50%;
  background: #f5f5f5;
  border: 1px solid #555;
  box-sizing: border-box;
}

.taskbar {
  height: 24px;
  flex: none;
  background: linear-gradient(90deg, #241b16, #1a1817 50%, #1a1f28);
  display: flex;
  align-items: stretch;
  justify-content: space-between;
  color: #ddd;
}

.apps {
  display: flex;
  padding-left: 3.500px;
}

.app-slot {
  width: 33.300px;
  display: flex;
  align-items: center;
  justify-content: center;
  box-sizing: border-box;
  position: relative;
}

.app-slot.on {
  background: #4b4a47;
}

.app-slot.active {
  background: #26394a;
  border-bottom: 2px solid #4a9fe0;
}

.app-num {
  position: absolute;
  inset: 0;
  display: flex;
  align-items: center;
  justify-content: center;
  font-size: 9px;
  color: #fff;
}

.tray {
  display: flex;
  align-items: center;
  padding-right: 12px;
}

.tray-cell {
  width: 17.400px;
  display: flex;
  justify-content: center;
}

.clock {
  font-size: 10px;
  margin-left: 7px;
  color: #ddd;
}
</style>

<style>
html, body {
  margin: 0;
  background: #fff;
}
</style>
